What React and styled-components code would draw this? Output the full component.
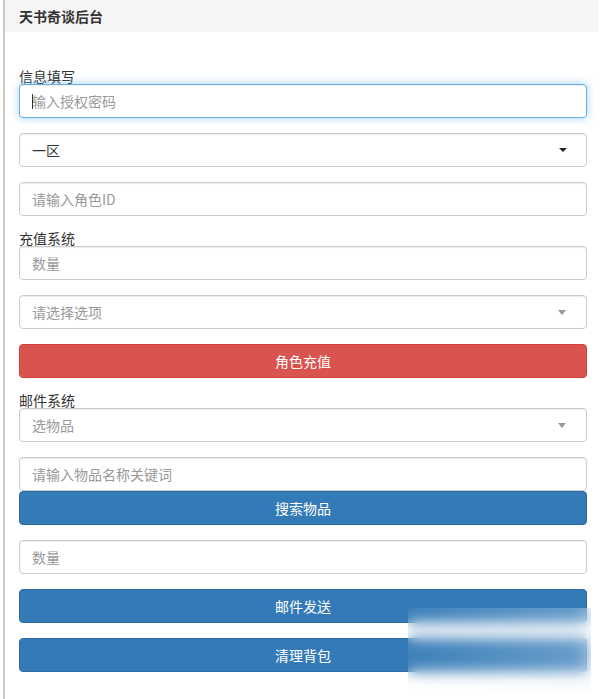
import React from "react";
import styled, { createGlobalStyle, css } from "styled-components";

const GlobalStyle = createGlobalStyle`
  html, body { margin: 0; padding: 0; background: #fff; }
  body {
    font-family: "Noto Sans CJK SC", "Noto Sans", "Liberation Sans", sans-serif;
    font-size: 14px;
    color: #333;
  }
  * { box-sizing: border-box; }
`;

const Page = styled.div`
  position: relative;
  margin-left: 3px;
  border-left: 2px solid #c9c9c9;
  min-height: 699px;
  overflow: hidden;
`;

const Header = styled.div`
  height: 32px;
  margin-right: 4px;
  padding-left: 14px;
  background: #f5f5f5;
  font-weight: bold;
  font-size: 14px;
  line-height: 32px;
  color: #333;
`;

const Form = styled.div`
  display: flex;
  flex-direction: column;
  padding: 37px 15px 0 14px;
`;

const SectionLabel = styled.div`
  font-size: 14px;
  line-height: 15px;
  height: 15px;
  color: #333;
`;

const controlBase = css`
  display: block;
  width: 100%;
  height: 34px;
  padding: 6px 12px;
  font-family: inherit;
  font-size: 14px;
  line-height: 20px;
  color: #555;
  background: #fff;
  border: 1px solid #ccc;
  border-radius: 4px;
  box-shadow: inset 0 1px 1px rgba(0, 0, 0, 0.075);
  margin-bottom: ${(p) => (p.$tight ? "0" : "15px")};
`;

const InputWrap = styled.div`
  position: relative;
`;

const TextInput = styled.input`
  ${controlBase}
  outline: none;
  &::placeholder { color: #999; }
  ${(p) =>
    p.$focused &&
    css`
      border-color: #66afe9;
      box-shadow: inset 0 1px 1px rgba(0, 0, 0, 0.075),
        0 0 8px rgba(102, 175, 233, 0.6);
    `}
`;

const Cursor = styled.span`
  position: absolute;
  left: 13px;
  top: 10px;
  width: 1px;
  height: 15px;
  background: #333;
`;

const SelectBox = styled.div`
  ${controlBase}
  display: flex;
  align-items: center;
  justify-content: space-between;
  color: ${(p) => (p.$placeholder ? "#999" : "#333")};
`;

const Caret = styled.span`
  width: 0;
  height: 0;
  margin-right: ${(p) => (p.$dark ? "7px" : "8px")};
  border-left: 4px solid transparent;
  border-right: 4px solid transparent;
  border-top: ${(p) => (p.$dark ? "4px solid #222" : "5px solid #999")};
`;

const Button = styled.button`
  display: block;
  width: 100%;
  height: 34px;
  padding: 6px 12px;
  font-family: inherit;
  font-size: 14px;
  line-height: 20px;
  color: #fff;
  text-align: center;
  border-radius: 4px;
  cursor: pointer;
  margin-bottom: 15px;
  border: 1px solid ${(p) => (p.$variant === "danger" ? "#d43f3a" : "#2e6da4")};
  background: ${(p) => (p.$variant === "danger" ? "#d9534f" : "#337ab7")};
`;

const Smudge = styled.div`
  position: absolute;
  left: 403px;
  top: 608px;
  width: 183px;
  height: 84px;
  backdrop-filter: blur(7px);
  -webkit-backdrop-filter: blur(7px);
  background: linear-gradient(
    to right,
    rgba(255, 255, 255, 0.05),
    rgba(235, 242, 250, 0.3)
  );
  pointer-events: none;
`;

export default function App() {
  return (
    <>
      <GlobalStyle />
      <Page>
        <Header>天书奇谈后台</Header>
        <Form>
          <SectionLabel>信息填写</SectionLabel>
          <InputWrap>
            <TextInput $focused placeholder="输入授权密码" readOnly />
            <Cursor />
          </InputWrap>
          <SelectBox>
            <span>一区</span>
            <Caret $dark />
          </SelectBox>
          <TextInput placeholder="请输入角色ID" readOnly />

          <SectionLabel>充值系统</SectionLabel>
          <TextInput placeholder="数量" readOnly />
          <SelectBox $placeholder>
            <span>请选择选项</span>
            <Caret />
          </SelectBox>
          <Button $variant="danger">角色充值</Button>

          <SectionLabel>邮件系统</SectionLabel>
          <SelectBox $placeholder>
            <span>选物品</span>
            <Caret />
          </SelectBox>
          <TextInput $tight placeholder="请输入物品名称关键词" readOnly />
          <Button>搜索物品</Button>
          <TextInput placeholder="数量" readOnly />
          <Button>邮件发送</Button>
          <Button>清理背包</Button>
        </Form>
        <Smudge />
      </Page>
    </>
  );
}
